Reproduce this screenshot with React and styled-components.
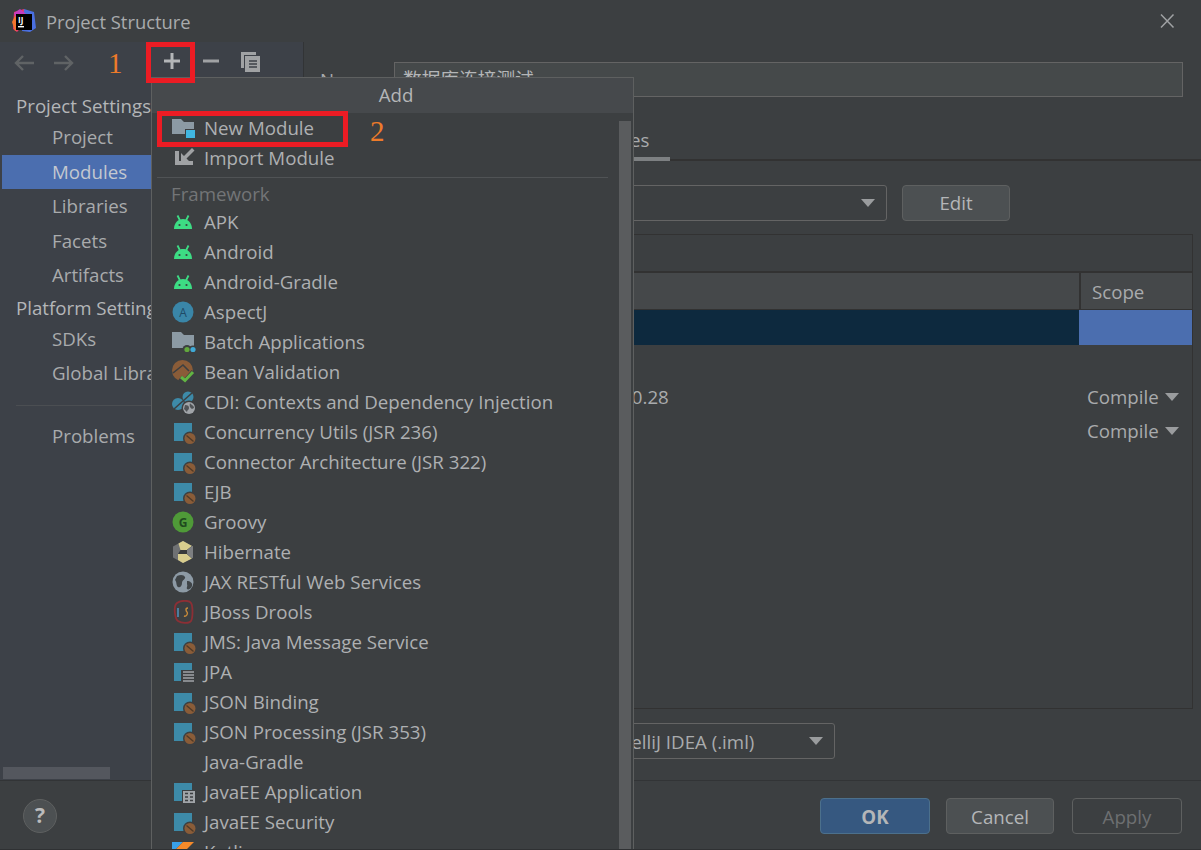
import styled, { createGlobalStyle } from "styled-components";

const GlobalStyle = createGlobalStyle`
  html, body {
    margin: 0;
    padding: 0;
    background: #3c3f41;
  }
  * {
    box-sizing: border-box;
  }
`;

const FONT = `"Open Sans", "Noto Sans CJK SC", sans-serif`;

const Dialog = styled.div`
  position: relative;
  width: 1201px;
  height: 850px;
  overflow: hidden;
  display: flex;
  flex-direction: column;
  background: #3c3f41;
  color: #b4b6b8;
  font-family: ${FONT};
  font-size: 18.7px;
  border-bottom: 1px solid #2f3133;
`;

const TitleBar = styled.div`
  height: 42px;
  flex: none;
  display: flex;
  align-items: center;
  padding: 0 26px 0 11px;
  gap: 9px;
  color: #a9abad;
  font-size: 18.4px;
`;

const TitleText = styled.span`
  flex: 1;
`;

const Body = styled.div`
  flex: 1;
  min-height: 0;
  display: flex;
`;

const Sidebar = styled.div`
  width: 304px;
  flex: none;
  display: flex;
  flex-direction: column;
  padding-left: 2px;
  background: #3d4148;
  border-right: 1px solid #323436;
`;

const SideToolbar = styled.div`
  height: 40px;
  flex: none;
  display: flex;
  align-items: center;
  padding-left: 10px;
`;

const ToolBtn = styled.span`
  display: flex;
  margin-left: ${(props) => props.$gap || 0}px;
`;

const Nav = styled.div`
  flex: 1;
  display: flex;
  flex-direction: column;
  padding-top: 9px;
  min-height: 0;
`;

const NavTitle = styled.div`
  height: 29px;
  line-height: 29.5px;
  padding-left: 14px;
  white-space: nowrap;
  color: #b4b6b8;
`;

const NavItem = styled.div`
  height: 34.5px;
  line-height: 34.5px;
  padding-left: 50px;
  white-space: nowrap;
  background: ${(props) => (props.$active ? "#4b6eaf" : "transparent")};
  color: ${(props) => (props.$active ? "#c3c8d0" : "#a9abad")};
`;

const NavSep = styled.div`
  height: 1px;
  margin: 14px 0 13px 14px;
  background: #4b4e52;
`;

const SideScroll = styled.div`
  width: 107px;
  height: 12px;
  margin: auto 0 1px 1px;
  background: #54575e;
`;

const Main = styled.div`
  flex: 1;
  min-width: 0;
  display: flex;
  flex-direction: column;
  padding: 20px 9px 0 16px;
`;

const NameRow = styled.div`
  display: flex;
  align-items: center;
  height: 35px;
  padding-right: 9px;
`;

const FieldLabel = styled.label`
  width: 74px;
  flex: none;
  color: #a9abad;
  white-space: nowrap;
`;

const NameInput = styled.div`
  flex: 1;
  height: 35px;
  padding: 0 8px;
  line-height: 31px;
  background: #45494a;
  border: 1px solid #646464;
  color: #b4b6b8;
`;

const Tabs = styled.div`
  height: 36px;
  margin: 28px -9px 0 -16px;
  padding-left: 4px;
  display: flex;
  border-bottom: 2px solid #323232;
`;

const Tab = styled.div`
  padding: 0 20px;
  height: 36px;
  line-height: 30px;
  color: #a9abad;
  white-space: nowrap;
  border-bottom: 4px solid ${(props) => (props.$active ? "#7d8082" : "transparent")};
`;

const SdkRow = styled.div`
  display: flex;
  align-items: center;
  height: 36px;
  margin-top: 24px;
`;

const Combo = styled.div`
  height: 36px;
  width: ${(props) => props.$width}px;
  padding: 0 11px 0 8px;
  display: flex;
  align-items: center;
  justify-content: space-between;
  border: 1px solid #646464;
  border-radius: 3px;
  color: #a9abad;
  white-space: nowrap;
`;

const Arrow = styled.span`
  width: 0;
  height: 0;
  border-left: 7px solid transparent;
  border-right: 7px solid transparent;
  border-top: 8px solid #9a9c9e;
`;

const Button = styled.div`
  height: 36px;
  width: ${(props) => props.$width}px;
  line-height: ${(props) => props.$lineHeight || 35}px;
  text-align: center;
  border-radius: 4px;
  border: 1px solid ${(props) => (props.$kind === "primary" ? "#4c708c" : "#5e6060")};
  background: ${(props) =>
    props.$kind === "primary" ? "#365880" : props.$kind === "off" ? "transparent" : "#4c5052"};
  color: ${(props) => (props.$kind === "off" ? "#6d6f71" : "#b4b6b8")};
  font-weight: ${(props) => (props.$kind === "primary" ? 700 : 400)};
  margin-left: ${(props) => props.$gap || 0}px;
`;

const DepsPanel = styled.div`
  height: 475px;
  margin-top: 13px;
  margin-right: -1px;
  display: flex;
  flex-direction: column;
  border: 1px solid #323232;
  border-left: none;
`;

const DepsToolbar = styled.div`
  height: 38px;
  flex: none;
  border-bottom: 2px solid #323232;
`;

const DepsRow = styled.div`
  display: flex;
  height: ${(props) => props.$height}px;
  flex: none;
  line-height: ${(props) => props.$height}px;
  background: ${(props) => props.$bg || "transparent"};
  border-bottom: ${(props) => (props.$head ? "1px solid #323232" : "none")};
`;

const DepsName = styled.div`
  flex: 1;
  min-width: 0;
  padding-left: 48px;
  white-space: nowrap;
  color: #a9abad;
`;

const DepsScope = styled.div`
  width: 113px;
  flex: none;
  padding-left: ${(props) => (props.$line ? 11 : 8)}px;
  padding-top: ${(props) => (props.$line ? 1 : 0)}px;
  display: flex;
  align-items: center;
  gap: 6px;
  color: #a9abad;
  background: ${(props) => props.$bg || "transparent"};
  border-left: ${(props) => (props.$line ? "2px solid #323232" : "none")};
`;

const FormatRow = styled.div`
  margin-top: 14px;
  display: flex;
  align-items: center;
  justify-content: space-between;
  width: 515px;
`;

const Footer = styled.div`
  height: 69px;
  flex: none;
  display: flex;
  align-items: center;
  padding: 2px 19px 0 23px;
  border-top: 1px solid #323436;
`;

const HelpBtn = styled.div`
  width: 34px;
  height: 34px;
  border-radius: 50%;
  background: #4c5052;
  border: 1px solid #5e6060;
  color: #bbbbbb;
  font-weight: 700;
  font-size: 21px;
  line-height: 31px;
  text-align: center;
  margin-right: auto;
`;

/* popup over the dialog */
const Popup = styled.div`
  position: absolute;
  left: 151px;
  top: 77px;
  bottom: 0;
  width: 483px;
  display: flex;
  flex-direction: column;
  background: #3c3f41;
  border: 1px solid #5e6060;
  border-bottom: none;
`;

const PopupHead = styled.div`
  height: 35px;
  flex: none;
  padding-left: 7px;
  line-height: 33px;
  text-align: center;
  color: #b4b6b8;
  background: #46494c;
`;

const PopupBody = styled.div`
  flex: 1;
  min-height: 0;
  display: flex;
  overflow: hidden;
`;

const PopupList = styled.div`
  flex: 1;
  min-width: 0;
`;

const PopupScroll = styled.div`
  width: 12px;
  flex: none;
  margin: 8px 2px 0 0;
  background: #5a5c5e;
`;

const MenuRow = styled.div`
  height: 30px;
  display: flex;
  align-items: center;
  gap: 8px;
  padding-left: 20px;
  white-space: nowrap;
  color: #aeb0b2;
`;

const MenuLabel = styled.span`
  line-height: 30px;
  height: 30px;
`;

const MenuSep = styled.div`
  height: 1px;
  margin: 4px 11px 0 5px;
  background: #505355;
`;

const MenuGroup = styled.div`
  height: 29px;
  line-height: 32px;
  padding-left: 19px;
  color: #737577;
`;

/* red annotations drawn over the screenshot */
const RedBox = styled.div`
  position: absolute;
  left: ${(props) => props.$x}px;
  top: ${(props) => props.$y}px;
  width: ${(props) => props.$w}px;
  height: ${(props) => props.$h}px;
  border: 5px solid #ec1c24;
`;

const Mark = styled.span`
  position: absolute;
  left: ${(props) => props.$x}px;
  top: ${(props) => props.$y}px;
  color: #ee7b2a;
  font-family: "Liberation Serif", serif;
  font-size: 29px;
  line-height: 32px;
`;

const Svg = styled.svg`
  width: ${(props) => props.$size || 24}px;
  height: ${(props) => props.$size || 24}px;
  flex: none;
  display: block;
`;

const Bean = () => (
  <>
    <circle cx="18" cy="18.5" r="7" fill="#3c3f41" />
    <circle cx="18" cy="18.5" r="5.5" fill="#8a5c38" />
    <path d="M14.5 15.5l7 6" stroke="#4f3a28" strokeWidth="1.4" />
  </>
);

const BlueSquare = () => <rect x="2" y="3" width="18" height="18" fill="#3d8aa8" />;

const icons = {
  newModule: (
    <>
      <path d="M0 3h9l3 3h10v12H0z" fill="#8c9aa4" />
      <rect x="13" y="13" width="11" height="10" fill="#3c3f41" />
      <rect x="14" y="14" width="9" height="8" fill="#40b6e0" />
    </>
  ),
  importModule: (
    <>
      <path d="M3 5h4v10h14v4H3z" fill="#a0a2a4" />
      <path d="M20 2l2.5 2.5-8 8 3 3H9V7l3 3z" fill="#a0a2a4" />
    </>
  ),
  android: (
    <>
      <path d="M2 19c0-6 4-10 9-10s9 4 9 10z" fill="#3ddc84" />
      <path d="M5.5 5.5l2.5 5M16.5 5.5L14 10.5" stroke="#3ddc84" strokeWidth="1.8" />
      <circle cx="7.5" cy="15" r="1.1" fill="#3c3f41" />
      <circle cx="14.5" cy="15" r="1.1" fill="#3c3f41" />
    </>
  ),
  aspect: (
    <>
      <circle cx="11" cy="12" r="10.5" fill="#3a86a8" />
      <text x="11" y="16.5" textAnchor="middle" fontSize="12" fontFamily="Open Sans" fill="#1f4a66">
        A
      </text>
    </>
  ),
  batch: (
    <>
      <path d="M0 2h9l3 3h10v13H0z" fill="#8c9aa4" />
      <circle cx="15" cy="19.5" r="4.5" fill="#3c3f41" />
      <circle cx="21" cy="19.5" r="4" fill="#3c3f41" />
      <circle cx="15" cy="19.5" r="2.6" fill="#62a83d" />
      <circle cx="21" cy="19.5" r="2.6" fill="#3fa9d6" />
    </>
  ),
  beanValidation: (
    <>
      <circle cx="10.5" cy="10.5" r="10.5" fill="#8a5c38" />
      <path d="M1 13L11 5l6 6" stroke="#3c3f41" strokeWidth="1.6" fill="none" />
      <path d="M8 18l5 4 9-10" stroke="#3c3f41" strokeWidth="6" fill="none" />
      <path d="M9 17l4 3.5 8-8.5" stroke="#62b543" strokeWidth="3" fill="none" />
    </>
  ),
  cdi: (
    <>
      <circle cx="16" cy="7" r="5.5" fill="#3d8aa8" />
      <circle cx="6" cy="14" r="6" fill="#3d8aa8" />
      <path d="M2 19L20 3" stroke="#3c3f41" strokeWidth="1.5" />
      <circle cx="17" cy="18" r="7.5" fill="#3c3f41" />
      <circle cx="17" cy="18" r="6" fill="#a0a4a8" />
      <path d="M13 15c3 0 4 1 4 3s-2 2-2 4l-3-3zM18 13c1 2 4 2 4 5l-2 1c-2-1-3-3-2-6z" fill="#4f5356" />
    </>
  ),
  web: (
    <>
      <BlueSquare />
      <Bean />
    </>
  ),
  groovy: (
    <>
      <circle cx="11" cy="12" r="10.5" fill="#4f9a38" />
      <text x="11" y="16.5" textAnchor="middle" fontSize="12" fontWeight="700" fontFamily="Open Sans" fill="#1f4a1f">
        G
      </text>
    </>
  ),
  hibernate: (
    <>
      <path d="M11 1l10 5.5v11L11 23 1 17.5v-11z" fill="#6f7173" />
      <path d="M6.5 3.5L11 1l9 5-5 4H8.5z" fill="#d8cd8e" />
      <path d="M6 14h9l5 4.5L11 23l-5-3z" fill="#d8cd8e" />
      <path d="M8.5 10H15l5-4v12.5L15 14H6z" fill="#37393b" />
      <path d="M15 10l5-4 1 .5v11l-1 1-5-4.5z" fill="#7d7f81" />
    </>
  ),
  globe: (
    <>
      <circle cx="11" cy="12" r="10.5" fill="#8d9aa5" />
      <path d="M5 6c4-2 7-1 8 1s-3 3-3 6-2 5-4 4-1-5-3-7zM15 11c3 0 6 2 5 5s-4 4-5 3 1-3 0-5z" fill="#3f4447" />
    </>
  ),
  jboss: (
    <>
      <path d="M5 3c4-3 12-3 14 0s2 15 0 18-10 2-13 0-5-15-1-18z" fill="none" stroke="#8c2f35" strokeWidth="1.8" />
      <path d="M6 8v9" stroke="#4f8fb8" strokeWidth="1.6" />
      <path d="M16 8c-3 0-2 3-1 4s0 5-3 4" stroke="#c78a3a" strokeWidth="1.4" fill="none" />
    </>
  ),
  jpa: (
    <>
      <BlueSquare />
      <rect x="9" y="10" width="15" height="14" fill="#3c3f41" />
      <path d="M11 12h11M11 15h11M11 18h11M11 21h11" stroke="#a0a4a8" strokeWidth="1.6" />
    </>
  ),
  javaee: (
    <>
      <BlueSquare />
      <rect x="10" y="10" width="14" height="14" fill="#3c3f41" />
      <rect x="11" y="11" width="12" height="12" fill="#a0a4a8" />
      <path d="M13 13.5h3M13 17h3M13 20.5h3M18 13.5h3M18 17h3M18 20.5h3" stroke="#3c3f41" strokeWidth="1.4" />
    </>
  ),
  kotlin: (
    <>
      <path d="M0 2h11L0 13z" fill="#39a0e8" />
      <path d="M11 2h11L0 24V13z" fill="#f58a2a" />
    </>
  ),
  none: null,
};

const menuItems = [
  ["android", "APK"],
  ["android", "Android"],
  ["android", "Android-Gradle"],
  ["aspect", "AspectJ"],
  ["batch", "Batch Applications"],
  ["beanValidation", "Bean Validation"],
  ["cdi", "CDI: Contexts and Dependency Injection"],
  ["web", "Concurrency Utils (JSR 236)"],
  ["web", "Connector Architecture (JSR 322)"],
  ["web", "EJB"],
  ["groovy", "Groovy"],
  ["hibernate", "Hibernate"],
  ["globe", "JAX RESTful Web Services"],
  ["jboss", "JBoss Drools"],
  ["web", "JMS: Java Message Service"],
  ["jpa", "JPA"],
  ["web", "JSON Binding"],
  ["web", "JSON Processing (JSR 353)"],
  ["none", "Java-Gradle"],
  ["javaee", "JavaEE Application"],
  ["web", "JavaEE Security"],
  ["kotlin", "Kotlin"],
];

const MenuEntry = ({ icon, label }) => (
  <MenuRow>
    <Svg viewBox="0 0 24 24">{icons[icon]}</Svg>
    <MenuLabel>{label}</MenuLabel>
  </MenuRow>
);

const Logo = () => (
  <Svg $size={26} viewBox="0 0 26 26">
    <path d="M3 4l10-3 3 12-10 11-4-3z" fill="#e8386e" />
    <path d="M1 14l4-8 4 14-5 3z" fill="#f2762e" />
    <path d="M13 1l10 3 2 16-6 4-8-1z" fill="#4a6fe0" />
    <path d="M3 5l6-4 6 5-8 8z" fill="#c23cc0" />
    <rect x="5" y="6" width="16" height="16" fill="#000" />
    <text x="7" y="14.5" fontSize="8" fontWeight="700" fontFamily="Open Sans" fill="#fff">
      IJ
    </text>
    <rect x="7" y="18" width="6" height="1.4" fill="#fff" />
  </Svg>
);

const App = () => {
  return (
    <Dialog>
      <GlobalStyle />
      <TitleBar>
        <Logo />
        <TitleText>Project Structure</TitleText>
        <svg width="16" height="16" viewBox="0 0 16 16">
          <path d="M2 1.5l12.5 13M14.5 1.5L2 14.5" stroke="#a0a2a4" strokeWidth="1.5" fill="none" />
        </svg>
      </TitleBar>

      <Body>
        <Sidebar>
          <SideToolbar>
            <ToolBtn>
              <Svg viewBox="0 0 24 24">
                <path d="M22 13H4M11 6l-7 7 7 7" stroke="#606365" strokeWidth="2.4" fill="none" />
              </Svg>
            </ToolBtn>
            <ToolBtn $gap={16}>
              <Svg viewBox="0 0 24 24">
                <path d="M2 13h18M13 6l7 7-7 7" stroke="#606365" strokeWidth="2.4" fill="none" />
              </Svg>
            </ToolBtn>
            <ToolBtn $gap={84}>
              <Svg viewBox="0 0 24 24">
                <path d="M12 3v16M4 11h16" stroke="#b4b6b8" strokeWidth="3" fill="none" />
              </Svg>
            </ToolBtn>
            <ToolBtn $gap={15}>
              <Svg viewBox="0 0 24 24">
                <path d="M4 11h16" stroke="#a0a2a4" strokeWidth="3" fill="none" />
              </Svg>
            </ToolBtn>
            <ToolBtn $gap={15}>
              <Svg viewBox="0 0 24 24">
                <path d="M3 2h15v3H6v13H3z" fill="#a0a2a4" />
                <path d="M7 6h15v16H7z" fill="#a0a2a4" />
                <path d="M11 11h8M11 14h8M11 17h8" stroke="#3d4148" strokeWidth="1.6" />
              </Svg>
            </ToolBtn>
          </SideToolbar>
          <Nav>
            <NavTitle>Project Settings</NavTitle>
            <NavItem>Project</NavItem>
            <NavItem $active>Modules</NavItem>
            <NavItem>Libraries</NavItem>
            <NavItem>Facets</NavItem>
            <NavItem>Artifacts</NavItem>
            <NavTitle>Platform Settings</NavTitle>
            <NavItem>SDKs</NavItem>
            <NavItem>Global Libraries</NavItem>
            <NavSep />
            <NavItem>Problems</NavItem>
            <SideScroll />
          </Nav>
        </Sidebar>

        <Main>
          <NameRow>
            <FieldLabel>Name:</FieldLabel>
            <NameInput>数据库连接测试</NameInput>
          </NameRow>
          <Tabs>
            <Tab>Sources</Tab>
            <Tab>Paths</Tab>
            <Tab $active>Dependencies</Tab>
          </Tabs>
          <SdkRow>
            <FieldLabel>Module SDK:</FieldLabel>
            <Combo $width={493}>
              Project SDK 1.8
              <Arrow />
            </Combo>
            <Button $width={108} $gap={15} $lineHeight={33}>
              Edit
            </Button>
          </SdkRow>
          <DepsPanel>
            <DepsToolbar />
            <DepsRow $height={37} $bg="#45484a" $head>
              <DepsName>Export</DepsName>
              <DepsScope $line>Scope</DepsScope>
            </DepsRow>
            <DepsRow $height={35} $bg="#0d293e">
              <DepsName>1.8 (java version "1.8.0")</DepsName>
              <DepsScope $bg="#4b6eaf" />
            </DepsRow>
            <DepsRow $height={35}>
              <DepsName>&lt;Module source&gt;</DepsName>
              <DepsScope />
            </DepsRow>
            <DepsRow $height={34}>
              <DepsName>mysql:mysql-connector-java:8.0.28</DepsName>
              <DepsScope>
                Compile
                <Arrow />
              </DepsScope>
            </DepsRow>
            <DepsRow $height={34}>
              <DepsName>junit:junit:4.13</DepsName>
              <DepsScope>
                Compile
                <Arrow />
              </DepsScope>
            </DepsRow>
          </DepsPanel>
          <FormatRow>
            <FieldLabel>Dependencies storage format:</FieldLabel>
            <Combo $width={236}>
              IntelliJ IDEA (.iml)
              <Arrow />
            </Combo>
          </FormatRow>
        </Main>
      </Body>

      <Footer>
        <HelpBtn>?</HelpBtn>
        <Button $width={110} $kind="primary">
          OK
        </Button>
        <Button $width={108} $gap={16}>
          Cancel
        </Button>
        <Button $width={110} $gap={18} $kind="off">
          Apply
        </Button>
      </Footer>

      <Popup>
        <PopupHead>Add</PopupHead>
        <PopupBody>
          <PopupList>
            <MenuEntry icon="newModule" label="New Module" />
            <MenuEntry icon="importModule" label="Import Module" />
            <MenuSep />
            <MenuGroup>Framework</MenuGroup>
            {menuItems.map(([icon, label]) => (
              <MenuEntry key={label} icon={icon} label={label} />
            ))}
          </PopupList>
          <PopupScroll />
        </PopupBody>
      </Popup>

      <RedBox $x={146} $y={42} $w={49} $h={41} />
      <RedBox $x={157} $y={111} $w={191} $h={36} />
      <Mark $x={108} $y={47}>
        1
      </Mark>
      <Mark $x={370} $y={115}>
        2
      </Mark>
    </Dialog>
  );
};

export default App;
